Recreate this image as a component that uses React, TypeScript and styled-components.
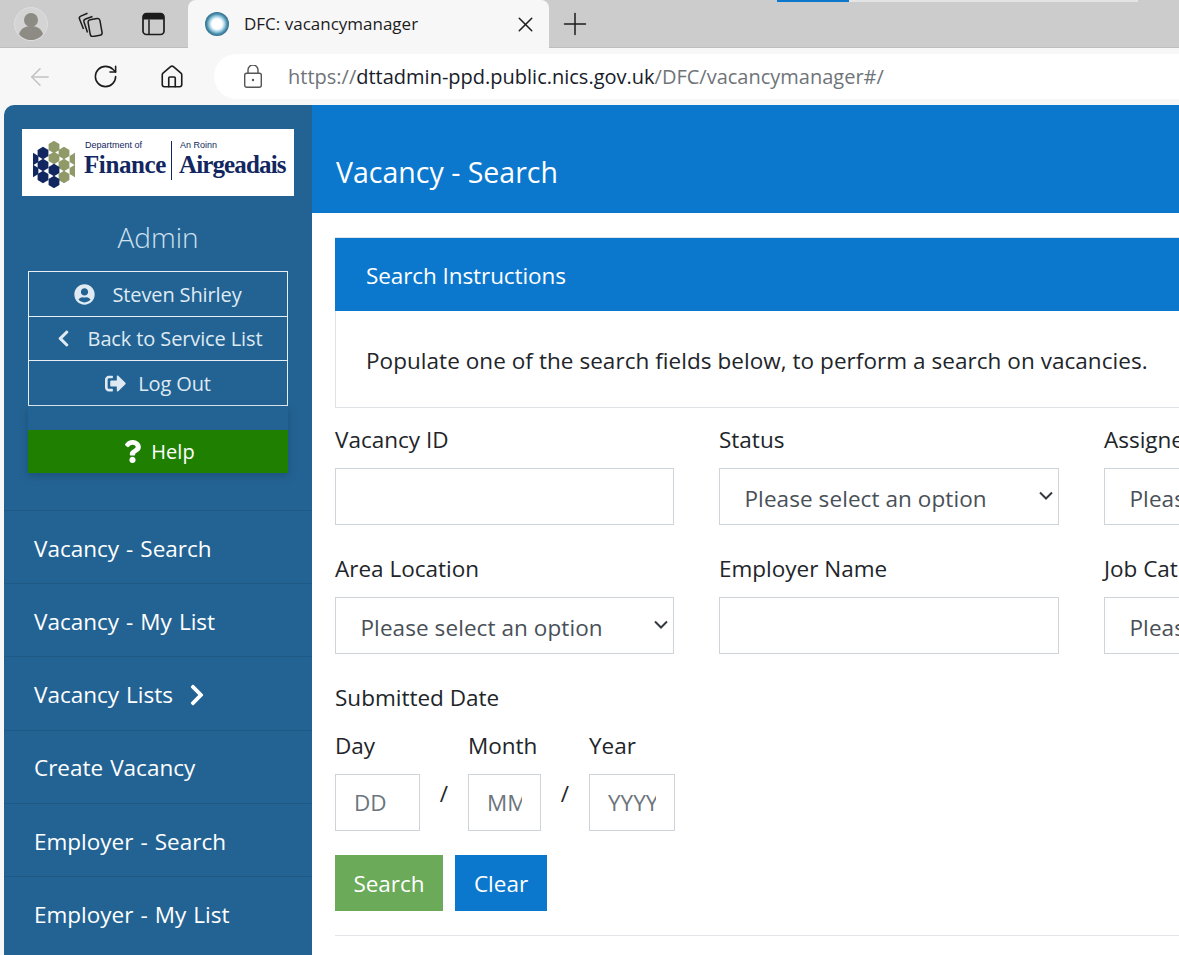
import React from "react";
import styled, { createGlobalStyle } from "styled-components";
import { ArrowLeft, RotateCw, Plus, X, House } from "lucide-react";
import {
  FaUserCircle,
  FaChevronLeft,
  FaChevronRight,
  FaSignOutAlt,
  FaQuestion,
} from "react-icons/fa";

const GlobalStyle = createGlobalStyle`
  html, body {
    margin: 0;
    width: 1179px;
    height: 955px;
    overflow: hidden;
    background: #f7f7f7;
  }
  * {
    box-sizing: border-box;
  }
  body {
    font-family: "Open Sans", "Noto Sans", sans-serif;
  }
`;

const Window = styled.div`
  width: 1179px;
  height: 955px;
  display: flex;
  flex-direction: column;
  overflow: hidden;
  position: relative;
`;

const TabStrip = styled.div`
  height: 48px;
  flex: none;
  background: #cccccc;
  display: flex;
  align-items: flex-end;
  padding-left: 14px;
  border-bottom: 1px solid #bdbdbd;
`;

const StripIcon = styled.div<{ $w: number }>`
  width: ${(p) => p.$w}px;
  height: 47px;
  flex: none;
  display: flex;
  align-items: center;
`;

const Tab = styled.div`
  width: 361px;
  height: 48px;
  flex: none;
  margin-bottom: -1px;
  background: #f7f7f7;
  border-radius: 8px 8px 0 0;
  display: flex;
  align-items: center;
  padding: 0 11px 0 17px;
  color: #1c1c1c;
`;

const TabTitle = styled.span`
  flex: 1;
  margin: 0 0 2px 15px;
  font-size: 17px;
`;

const Favicon = styled.div`
  width: 24px;
  height: 24px;
  margin-bottom: 1px;
  border-radius: 50%;
  background: radial-gradient(circle closest-side, #ffffff 0 42%, #a9d6e8 62%, #4a8cab 84%, #2f6f8c 100%);
`;

const NewTab = styled.div`
  margin-left: 8px;
  height: 47px;
  display: flex;
  align-items: center;
  color: #1c1c1c;
`;

const LoadingBar = styled.div`
  position: absolute;
  left: 777px;
  top: 0;
  width: 361px;
  height: 2px;
  background: #e4e4e4;
`;

const LoadingFill = styled.div`
  width: 72px;
  height: 2px;
  background: #0b78ce;
`;

const Toolbar = styled.div`
  height: 57px;
  flex: none;
  background: #f7f7f7;
  display: flex;
  align-items: center;
  padding-left: 26px;
`;

const ToolButton = styled.div<{ $w: number; $muted?: boolean }>`
  width: ${(p) => p.$w}px;
  flex: none;
  display: flex;
  align-items: center;
  color: ${(p) => (p.$muted ? "#c2c2c2" : "#1c1c1c")};
`;

const AddressBar = styled.div`
  flex: 1;
  height: 45px;
  margin-left: 2px;
  margin-right: -40px;
  background: #ffffff;
  border-radius: 23px;
  display: flex;
  align-items: center;
  padding-left: 30px;
`;

const Url = styled.span`
  margin-left: 26px;
  font-size: 20px;
  color: #6f7479;
  white-space: nowrap;
`;

const UrlHost = styled.span`
  color: #17202a;
`;

const Page = styled.div`
  flex: 1;
  min-height: 0;
  display: flex;
  padding-left: 4px;
`;

const Sidebar = styled.aside`
  width: 308px;
  flex: none;
  background: #236393;
  border-top-left-radius: 10px;
  padding-top: 24px;
  display: flex;
  flex-direction: column;
`;

const LogoCard = styled.div`
  width: 272px;
  height: 67px;
  margin-left: 18px;
  flex: none;
  background: #ffffff;
  display: flex;
  align-items: center;
  padding-left: 11px;
  color: #12275f;
  font-family: "Liberation Serif", serif;
`;

const LogoMark = styled.svg`
  width: 42px;
  height: 47px;
  flex: none;
  margin-top: 4px;
`;

const LogoColumn = styled.div<{ $divider?: boolean }>`
  display: flex;
  flex-direction: column;
  height: 39px;
  margin-bottom: 4px;
  padding-left: ${(p) => (p.$divider ? "7px" : "9px")};
  margin-left: ${(p) => (p.$divider ? "5px" : "0")};
  border-left: ${(p) => (p.$divider ? "1px solid #12275f" : "none")};
`;

const LogoSmall = styled.span`
  font-family: "Liberation Sans", sans-serif;
  font-size: 9px;
  line-height: 9px;
  padding-left: 1px;
  white-space: nowrap;
`;

const LogoBig = styled.span<{ $tight?: boolean }>`
  margin-top: 2px;
  font-size: 25px;
  line-height: 25px;
  font-weight: 700;
  letter-spacing: ${(p) => (p.$tight ? "-0.85px" : "-0.4px")};
  white-space: nowrap;
`;

const RoleTitle = styled.div`
  margin-top: 21px;
  text-align: center;
  font-size: 28px;
  line-height: 40px;
  font-weight: 300;
  color: #cfe0ee;
`;

const UserMenu = styled.div`
  width: 260px;
  margin: 15px 0 0 24px;
  display: flex;
  flex-direction: column;
`;

const UserButton = styled.div<{ $gap: number; $h: number }>`
  height: ${(p) => p.$h}px;
  border: 1px solid #e6eff6;
  margin-top: -1px;
  display: flex;
  align-items: center;
  justify-content: center;
  gap: ${(p) => p.$gap}px;
  color: #dfeaf3;
  font-size: 20px;
  letter-spacing: -0.12px;
`;

const HelpBox = styled.div`
  width: 260px;
  margin-left: 24px;
  padding-top: 24px;
  box-shadow: 0 3px 8px rgba(20, 50, 80, 0.35);
`;

const HelpButton = styled.div`
  height: 43px;
  background: #1f7f00;
  color: #ffffff;
  display: flex;
  align-items: center;
  justify-content: center;
  gap: 7px;
  font-size: 20px;
`;

const Nav = styled.nav`
  margin-top: 37px;
  display: flex;
  flex-direction: column;
`;

const NavItem = styled.div`
  height: 73.2px;
  flex: none;
  border-top: 1px solid #1f5a87;
  padding: 2.5px 0 0 30px;
  display: flex;
  align-items: center;
  gap: 12px;
  color: #ffffff;
  font-size: 22.5px;
  word-spacing: 1.2px;
`;

const Main = styled.main`
  width: 1300px;
  flex: none;
  background: #ffffff;
`;

const PageHeader = styled.header`
  height: 108px;
  background: #0b78ce;
  color: #ffffff;
  padding: 45px 0 0 24px;
  font-size: 28.5px;
  line-height: 44px;
`;

const Content = styled.div`
  padding: 24px 0 0 23px;
`;

const InfoPanel = styled.section`
  border: 1px solid #e0e3e6;
  border-right: none;
  margin-bottom: 13px;
`;

const InfoTitle = styled.div`
  height: 73px;
  margin: 0 0 0 -1px;
  background: #0b78ce;
  color: #ffffff;
  padding: 2px 0 0 31px;
  display: flex;
  align-items: center;
  font-size: 22.5px;
  letter-spacing: -0.08px;
`;

const InfoBody = styled.div`
  height: 97px;
  padding: 31px 0 0 30px;
  font-size: 22.5px;
  line-height: 40px;
  margin-top: -1px;
  letter-spacing: 0.05px;
  color: #212529;
`;

const FieldGrid = styled.div`
  display: grid;
  grid-template-columns: 339px 340px 340px;
  column-gap: 45px;
  row-gap: 25px;
`;

const Field = styled.div`
  display: flex;
  flex-direction: column;
`;

const Label = styled.label`
  height: 36px;
  margin-bottom: 11px;
  display: flex;
  align-items: center;
  color: #212529;
  font-size: 22.5px;
  white-space: nowrap;
`;

const TextInput = styled.input`
  width: 100%;
  height: 57px;
  border: 1px solid #ced4da;
  background: #ffffff;
  padding: 0 18px;
  font: inherit;
  font-size: 22.5px;
  outline: none;
  border-radius: 0;
  &::placeholder {
    color: #6c757d;
    opacity: 1;
  }
`;

const SelectBox = styled.div`
  height: 57px;
  border: 1px solid #ced4da;
  background: #ffffff;
  display: flex;
  align-items: center;
  justify-content: space-between;
  padding: 3px 5px 0 24.5px;
  color: #495057;
  font-size: 22.5px;
  letter-spacing: 0.08px;
  white-space: nowrap;
`;

const Caret = styled.svg`
  width: 14px;
  height: 9px;
  flex: none;
  margin-bottom: 5px;
`;

const SectionLabel = styled(Label)`
  margin-top: 25px;
  margin-bottom: 12px;
`;

const DateRow = styled.div`
  display: flex;
  align-items: flex-start;
`;

const DatePart = styled.div<{ $w: number }>`
  width: ${(p) => p.$w}px;
  flex: none;
  display: flex;
  flex-direction: column;
`;

const DateInput = styled(TextInput)`
  color: #6c757d;
`;

const Slash = styled.div`
  width: 48px;
  flex: none;
  padding-top: 49px;
  text-align: center;
  color: #212529;
  font-size: 22.5px;
  line-height: 36px;
`;

const ButtonRow = styled.div`
  display: flex;
  gap: 12px;
  margin-top: 24px;
`;

const Button = styled.button<{ $bg: string; $w: number }>`
  width: ${(p) => p.$w}px;
  height: 56px;
  border: none;
  border-radius: 0;
  padding: 0;
  background: ${(p) => p.$bg};
  color: #ffffff;
  font: inherit;
  font-size: 22.5px;
`;

const Rule = styled.hr`
  margin: 24px 0 0;
  border: none;
  border-top: 1px solid #e3e5e8;
`;

// honeycomb centres, in page pixels: the outer two columns get clipped by the viewBox
const navyHexes = [[33, 159], [33, 171], [43, 153], [43, 165], [43, 177], [54, 170], [54, 182]];
const oliveHexes = [[54, 147], [54, 158], [64, 153], [64, 165], [64, 177], [75, 159], [75, 171]];

const hexPoints = (x: number, y: number) =>
  `${x},${y - 6.2} ${x + 5.4},${y - 3.1} ${x + 5.4},${y + 3.1} ${x},${y + 6.2} ${x - 5.4},${y + 3.1} ${x - 5.4},${y - 3.1}`;

const HexLogo = () => (
  <LogoMark viewBox="33 141 42 47">
    {oliveHexes.map(([x, y]) => (
      <polygon key={`${x}-${y}`} fill="#8f9a68" points={hexPoints(x, y)} />
    ))}
    {navyHexes.map(([x, y]) => (
      <polygon key={`${x}-${y}`} fill="#12275f" points={hexPoints(x, y)} />
    ))}
  </LogoMark>
);

const Avatar = () => (
  <svg width="34" height="34" viewBox="0 0 34 34">
    <circle cx="17" cy="17" r="16.5" fill="#d4d4d4" stroke="#dedede" />
    <circle cx="17" cy="13" r="7" fill="#8e8a84" />
    <path d="M5 27c2-6 7-8 12-8s10 2 12 8c-3 4-8 6-12 6s-9-2-12-6z" fill="#8e8a84" />
  </svg>
);

const CollectionsIcon = () => (
  <svg width="26" height="26" viewBox="0 0 26 26" fill="none" stroke="#1c1c1c" strokeWidth="1.5">
    <rect x="12" y="8" width="12" height="17" rx="2.5" transform="rotate(-10 18 16)" />
    <path d="M10.5 21.5 7 11c-.4-1.3.2-2.5 1.5-3L15.5 5.5" />
    <path d="M6.5 18 2.5 8C2 6.700 2.600 5.600 3.800 5.100L10.500 2.200" />
  </svg>
);

const TabsIcon = () => (
  <svg width="26" height="26" viewBox="0 0 26 26" fill="none">
    <rect x="3" y="2.500" width="21" height="21" rx="3.500" stroke="#1c1c1c" strokeWidth="1.700" />
    <path d="M3 6a3.500 3.500 0 0 1 3.500-3.500h14A3.500 3.500 0 0 1 24 6v2.500H3z" fill="#1c1c1c" />
    <path d="M9 8.500v15" stroke="#1c1c1c" strokeWidth="1.500" />
  </svg>
);

const LockIcon = () => (
  <svg width="18" height="23" viewBox="0 0 18 23" fill="none" stroke="#555555" strokeWidth="1.400">
    <rect x="0.700" y="8.200" width="16.600" height="14.100" rx="2" />
    <path d="M4 8V5a5 5 0 0 1 10 0v3" />
    <circle cx="9" cy="15" r="1.200" fill="#555555" stroke="none" />
  </svg>
);

const SelectField = () => (
  <SelectBox>
    <span>Please select an option</span>
    <Caret viewBox="0 0 14 9">
      <path d="M1 1.500l6 6 6-6" fill="none" stroke="#343a40" strokeWidth="2" />
    </Caret>
  </SelectBox>
);

const navItems = [
  "Vacancy - Search",
  "Vacancy - My List",
  "Vacancy Lists",
  "Create Vacancy",
  "Employer - Search",
  "Employer - My List",
];

export default function App() {
  return (
    <Window>
      <GlobalStyle />
      <LoadingBar>
        <LoadingFill />
      </LoadingBar>
      <TabStrip>
        <StripIcon $w={63}>
          <Avatar />
        </StripIcon>
        <StripIcon $w={63}>
          <CollectionsIcon />
        </StripIcon>
        <StripIcon $w={48}>
          <TabsIcon />
        </StripIcon>
        <Tab>
          <Favicon />
          <TabTitle>DFC: vacancymanager</TabTitle>
          <X size={25} strokeWidth={1.4} />
        </Tab>
        <NewTab>
          <Plus size={36} strokeWidth={1} />
        </NewTab>
      </TabStrip>
      <Toolbar>
        <ToolButton $w={66} $muted>
          <ArrowLeft size={28} strokeWidth={1.3} />
        </ToolButton>
        <ToolButton $w={67}>
          <RotateCw size={27} strokeWidth={1.4} />
        </ToolButton>
        <ToolButton $w={53}>
          <House size={26} strokeWidth={1.5} />
        </ToolButton>
        <AddressBar>
          <LockIcon />
          <Url>
            https://<UrlHost>dttadmin-ppd.public.nics.gov.uk</UrlHost>/DFC/vacancymanager#/
          </Url>
        </AddressBar>
      </Toolbar>
      <Page>
        <Sidebar>
          <LogoCard>
            <HexLogo />
            <LogoColumn>
              <LogoSmall>Department of</LogoSmall>
              <LogoBig>Finance</LogoBig>
            </LogoColumn>
            <LogoColumn $divider>
              <LogoSmall>An Roinn</LogoSmall>
              <LogoBig $tight>Airgeadais</LogoBig>
            </LogoColumn>
          </LogoCard>
          <RoleTitle>Admin</RoleTitle>
          <UserMenu>
            <UserButton $gap={17} $h={46}>
              <FaUserCircle size={21} />
              Steven Shirley
            </UserButton>
            <UserButton $gap={15} $h={45}>
              <FaChevronLeft size={19} />
              Back to Service List
            </UserButton>
            <UserButton $gap={12} $h={46}>
              <FaSignOutAlt size={21} />
              Log Out
            </UserButton>
          </UserMenu>
          <HelpBox>
            <HelpButton>
              <FaQuestion size={23} />
              Help
            </HelpButton>
          </HelpBox>
          <Nav>
            {navItems.map((item) => (
              <NavItem key={item}>
                {item}
                {item === "Vacancy Lists" && <FaChevronRight size={24} />}
              </NavItem>
            ))}
          </Nav>
        </Sidebar>
        <Main>
          <PageHeader>Vacancy - Search</PageHeader>
          <Content>
            <InfoPanel>
              <InfoTitle>Search Instructions</InfoTitle>
              <InfoBody>
                Populate one of the search fields below, to perform a search on vacancies.
              </InfoBody>
            </InfoPanel>
            <FieldGrid>
              <Field>
                <Label>Vacancy ID</Label>
                <TextInput />
              </Field>
              <Field>
                <Label>Status</Label>
                <SelectField />
              </Field>
              <Field>
                <Label>Assigned To</Label>
                <SelectField />
              </Field>
              <Field>
                <Label>Area Location</Label>
                <SelectField />
              </Field>
              <Field>
                <Label>Employer Name</Label>
                <TextInput />
              </Field>
              <Field>
                <Label>Job Category</Label>
                <SelectField />
              </Field>
            </FieldGrid>
            <SectionLabel>Submitted Date</SectionLabel>
            <DateRow>
              <DatePart $w={85}>
                <Label>Day</Label>
                <DateInput placeholder="DD" />
              </DatePart>
              <Slash>/</Slash>
              <DatePart $w={73}>
                <Label>Month</Label>
                <DateInput placeholder="MM" />
              </DatePart>
              <Slash>/</Slash>
              <DatePart $w={86}>
                <Label>Year</Label>
                <DateInput placeholder="YYYY" />
              </DatePart>
            </DateRow>
            <ButtonRow>
              <Button $bg="#6aaa58" $w={108}>Search</Button>
              <Button $bg="#0b78ce" $w={92}>Clear</Button>
            </ButtonRow>
            <Rule />
          </Content>
        </Main>
      </Page>
    </Window>
  );
}
